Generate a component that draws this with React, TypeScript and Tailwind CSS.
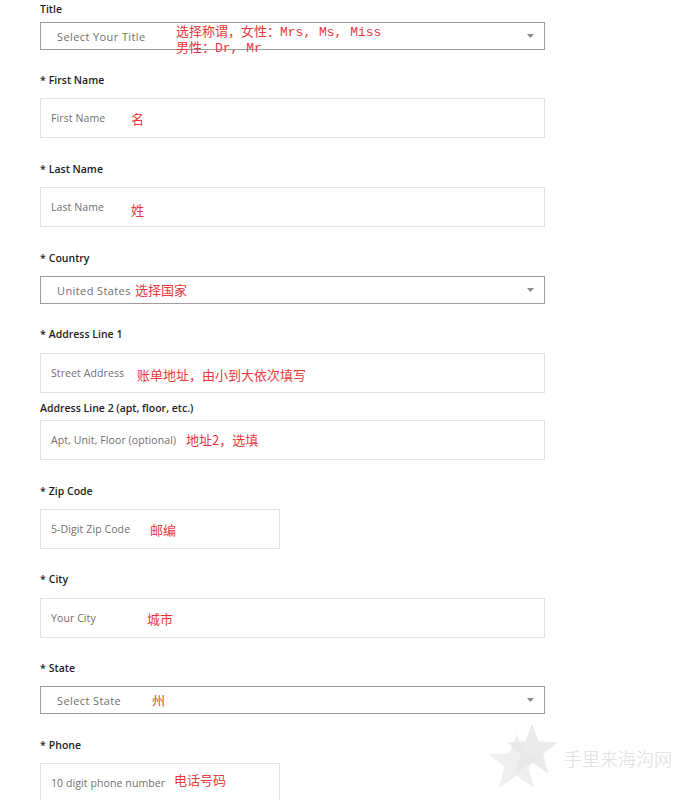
import React from "react";

type FieldProps = {
  label: string;
  required?: boolean;
  placeholder: string;
  note?: React.ReactNode;
  noteClass?: string;
  noteFont?: string;
  select?: boolean;
  short?: boolean;
  wrapClass?: string;
  labelClass?: string;
};

const Arrow = () => (
  <svg className="absolute right-[10px] top-1/2 -translate-y-1/2" width="7" height="4" viewBox="0 0 7 4">
    <path d="M0 0h7L3.5 4z" fill="#8a8a8a" />
  </svg>
);

const Field = ({
  label,
  required,
  placeholder,
  note,
  noteClass = "",
  noteFont = "font-['Noto_Sans_CJK_SC',sans-serif]",
  select,
  short,
  wrapClass = "mt-[23px]",
  labelClass = "mb-[11px]",
}: FieldProps) => {
  return (
    <div className={wrapClass}>
      <div
        className={`${labelClass} text-[10.5px] font-semibold leading-[14px] text-[#1d1d1d] font-['Open_Sans',sans-serif]`}
      >
        {required && <span className="mr-[3px]">*</span>}
        {label}
      </div>
      <div
        className={`relative flex items-center ${short ? "w-[240px]" : "w-[505px]"} ${
          select
            ? "h-[28px] border border-[#9c9c9c] pl-[16px]"
            : "h-[40px] border border-[#e2e2e2] pl-[10px]"
        }`}
      >
        <span
          className={`pt-[2px] text-[#6f6f6f] font-['Open_Sans',sans-serif] ${
            select ? "text-[11px] tracking-[0.4px]" : "text-[10.5px] tracking-[0.1px]"
          }`}
        >
          {placeholder}
        </span>
        {note && (
          <span
            className={`absolute whitespace-nowrap text-[13px] leading-[16px] text-[#e8383d] ${noteFont} ${noteClass}`}
          >
            {note}
          </span>
        )}
        {select && <Arrow />}
      </div>
    </div>
  );
};

const Star = ({ fill }: { fill: string }) => (
  <path
    d="M36 2 L44.5 25 L69 26 L50 41 L57 66 L36 51.5 L15 66 L22 41 L3 26 L27.5 25 Z"
    fill={fill}
  />
);

export default function App() {
  return (
    <div className="relative min-h-[800px] w-[689px] overflow-hidden bg-white">
      <div className="pl-[40px] pt-[2px]">
        {/* Title */}
        <Field
          label="Title"
          placeholder="Select Your Title"
          select
          wrapClass=""
          labelClass="mb-[6px]"
          noteClass="left-[135px] top-[2px]"
          noteFont="font-['Liberation_Mono','Noto_Sans_CJK_SC',monospace]"
          note={
            <>
              <span className="block h-[16px]">选择称谓，女性：Mrs, Ms, Miss</span>
              <span className="block h-[16px]">男性：Dr, Mr</span>
            </>
          }
        />

        <Field label="First Name" required placeholder="First Name" note="名" noteClass="left-[90px] top-[12px]" />
        <Field label="Last Name" required placeholder="Last Name" note="姓" noteClass="left-[90px] top-[14px]" wrapClass="mt-[24px]" />
        <Field
          label="Country"
          required
          placeholder="United States"
          select
          note="选择国家"
          noteClass="left-[94px] top-[5px]"
          wrapClass="mt-[24px]"
        />
        <Field
          label="Address Line 1"
          required
          placeholder="Street Address"
          note="账单地址，由小到大依次填写"
          noteClass="left-[96px] top-[13px]"
          labelClass="mb-[12px]"
        />
        <Field
          label="Address Line 2 (apt, floor, etc.)"
          placeholder="Apt, Unit, Floor (optional)"
          note="地址2，选填"
          noteClass="left-[145px] top-[11px]"
          wrapClass="mt-[8px]"
          labelClass="mb-[5px]"
        />
        <Field
          label="Zip Code"
          required
          placeholder="5-Digit Zip Code"
          short
          note="邮编"
          noteClass="left-[109px] top-[12px]"
          wrapClass="mt-[24px]"
        />
        <Field
          label="City"
          required
          placeholder="Your City"
          note="城市"
          noteClass="left-[106px] top-[12px]"
          labelClass="mb-[12px]"
        />
        <Field
          label="State"
          required
          placeholder="Select State"
          select
          note="州"
          noteClass="left-[111px] top-[5px]"
        />
        <Field
          label="Phone"
          required
          placeholder="10 digit phone number"
          short
          note="电话号码"
          noteClass="left-[133px] top-[8px]"
          wrapClass="mt-[24px]"
        />
      </div>

      {/* watermark */}
      <div className="pointer-events-none absolute left-[486px] top-[722px] flex items-center">
        <svg width="80" height="72" viewBox="0 0 80 72">
          <g transform="translate(0 10) scale(0.85)">
            <Star fill="#efefef" />
          </g>
          <g transform="translate(18 0) scale(0.78)" opacity="0.8">
            <Star fill="#e6e6e6" />
          </g>
        </svg>
        <span className="ml-[-2px] text-[18px] text-[#dedede] font-['Noto_Sans_CJK_SC',serif] font-light">
          手里来海沟网
        </span>
      </div>
    </div>
  );
}
